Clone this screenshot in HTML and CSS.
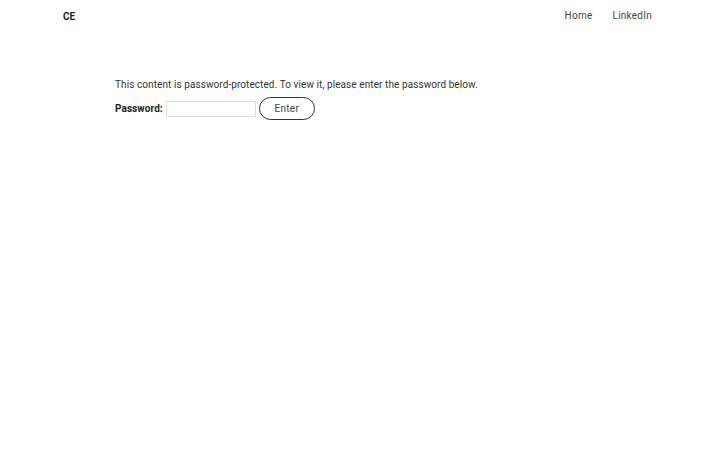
FILE: index.html
```html
<!DOCTYPE html>
<html>
<head>
<meta charset="utf-8">
<link rel="stylesheet" href="styles.css">
</head>
<body>
<header class="site-header">
  <a class="logo" href="#">CE</a>
  <nav class="nav">
    <a href="#">Home</a>
    <a href="#">LinkedIn</a>
  </nav>
</header>
<main class="content">
  <p class="notice">This content is password-protected. To view it, please enter the password below.</p>
  <form class="pw-form">
    <label class="pw-label">Password:</label>
    <input class="pw-input" type="password">
    <button class="pw-button" type="button">Enter</button>
  </form>
</main>
</body>
</html>
```
FILE: styles.css
```css
html, body {
  margin: 0;
  padding: 0;
  background: #fff;
}
body {
  font-family: Roboto, "Liberation Sans", sans-serif;
  color: #333;
  font-size: 10px;
  letter-spacing: 0.08px;
}
.site-header {
  display: flex;
  justify-content: space-between;
  align-items: center;
  padding: 7px 68px 0 63px;
  height: 16px;
}
.logo {
  font-weight: 700;
  color: #222;
  text-decoration: none;
  margin-top: 2px;
}
.nav {
  display: flex;
  gap: 20px;
  letter-spacing: 0.25px;
}
.nav a {
  color: #444;
  text-decoration: none;
}
.content {
  padding: 55px 0 0 115px;
}
.notice {
  margin: 0 0 5px 0;
  line-height: 14px;
}
.pw-form {
  display: flex;
  align-items: center;
  gap: 3px;
}
.pw-label {
  font-weight: 700;
  color: #222;
}
.pw-input {
  width: 88px;
  height: 14px;
  border: 1px solid #ddd;
  padding: 0;
  margin: 0;
}
.pw-button {
  width: 56px;
  height: 23px;
  border: 1.5px solid #333;
  border-radius: 12px;
  background: #fff;
  font-family: inherit;
  font-size: 10px;
  color: #444;
  letter-spacing: 0.3px;
  padding: 0;
}
```
